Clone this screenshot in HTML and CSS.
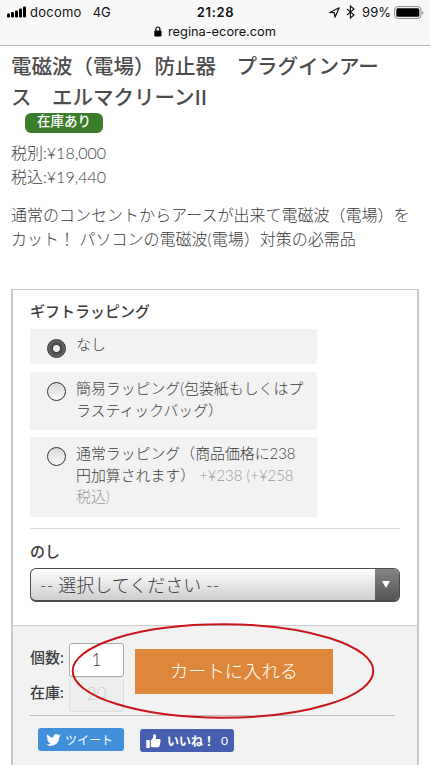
FILE: index.html
```html
<!DOCTYPE html>
<html lang="ja">
<head>
  <meta charset="UTF-8" />
  <meta name="viewport" content="width=device-width, initial-scale=1.0" />
  <title>電磁波（電場）防止器 プラグインアース エルマクリーンII</title>
  <link rel="stylesheet" href="styles.css">
</head>
<body>
  <header class="browser-bar">
    <div class="status">
      <div class="status-left">
        <svg class="signal" width="19" height="12" viewBox="0 0 19 12"><rect x="0" y="7.5" width="3" height="4" rx="1"/><rect x="4" y="6" width="3" height="5.5" rx="1"/><rect x="8" y="4.5" width="3" height="7" rx="1"/><rect x="12" y="2.5" width="3" height="9" rx="1"/><rect x="16" y="0.5" width="3" height="11" rx="1"/></svg>
        <span class="carrier">docomo</span>
        <span class="network">4G</span>
      </div>
      <div class="clock">21:28</div>
      <div class="status-right">
        <svg width="11" height="11" viewBox="0 0 11 11"><path d="M.8 5.500 10.200.8 6 10.200 5.300 5.700Z" fill="none" stroke="#111" stroke-width="1.200" stroke-linejoin="round"/></svg>
        <svg class="bluetooth" width="9" height="14" viewBox="0 0 9 14"><path d="M1 4l7 6-3.600 3V1L8 4l-7 6" fill="none" stroke="#111" stroke-width="1.100"/></svg>
        <span class="percent">99%</span>
        <svg class="battery" width="31" height="13" viewBox="0 0 31 13"><rect x=".6" y=".6" width="26.4" height="11.8" rx="3" fill="none" stroke="#888" stroke-width="1"/><rect x="2.3" y="2.2" width="23" height="8.6" rx="1.5"/><path d="M28.5 4.5q1.8 2 0 4z" fill="#777"/></svg>
      </div>
    </div>
    <div class="address">
      <svg width="8" height="11" viewBox="0 0 8 11"><rect x=".3" y="4.6" width="7.2" height="5.8" rx="1"/><path d="M1.9 5V3a2 2 0 0 1 4 0v2" fill="none" stroke="#000" stroke-width="1.2"/></svg>
      <span>regina-ecore.com</span>
    </div>
  </header>

  <main>
    <h1>電磁波（電場）防止器　プラグインアー<br>ス　エルマクリーンII</h1>
    <div class="stock-badge">在庫あり</div>
    <div class="price">税別:<span>¥18,000</span><br>税込:<span>¥19,440</span></div>
    <p class="description">通常のコンセントからアースが出来て電磁波（電場）を<br>カット！ パソコンの電磁波(電場）対策の必需品</p>

    <form class="order">
      <section class="options">
        <h2>ギフトラッピング</h2>
        <label class="option">
          <input type="radio" name="wrap" checked>
          <span>なし</span>
        </label>
        <label class="option two-line">
          <input type="radio" name="wrap">
          <span>簡易ラッピング(包装紙もしくはプ<br>ラスティックバッグ）</span>
        </label>
        <label class="option three-line">
          <input type="radio" name="wrap">
          <span>通常ラッピング（商品価格に238<br>円加算されます） <em>+¥238 (+¥258<br>税込)</em></span>
        </label>
        <hr>
        <h2 class="noshi">のし</h2>
        <div class="select">
          <span class="select-text">-- 選択してください --</span>
          <span class="select-arrow"><svg width="8" height="7" viewBox="0 0 8 7"><path d="M0 0h8L4 7z" fill="#fff"/></svg></span>
        </div>
      </section>

      <section class="cart">
        <div class="cart-row">
          <div class="labels">
            <span>個数:</span>
            <span>在庫:</span>
          </div>
          <div class="numbers">
            <div class="number">1</div>
            <div class="number disabled">20</div>
          </div>
          <button type="button" class="cart-btn">カートに入れる</button>
          <svg class="marker" width="304" height="98" viewBox="0 0 304 98"><ellipse cx="152" cy="49" rx="150.3" ry="46.7" fill="none" stroke="#c9151b" stroke-width="2"/></svg>
        </div>
        <div class="social">
          <a class="tweet">
            <svg width="15" height="12" viewBox="0 0 24 20"><path d="M24 2.4a10 10 0 0 1-2.8.8A5 5 0 0 0 23.3.5a10 10 0 0 1-3.1 1.2 4.9 4.9 0 0 0-8.4 4.5A14 14 0 0 1 1.7 1a4.9 4.9 0 0 0 1.5 6.6A5 5 0 0 1 1 7v.1a4.9 4.9 0 0 0 3.9 4.8 5 5 0 0 1-2.2.1 4.9 4.9 0 0 0 4.6 3.4A9.900 9.900 0 0 1 0 17.500 14 14 0 0 0 21.500 5.700v-.7A10 10 0 0 0 24 2.400z" fill="#fff"/></svg>
            <span>ツイート</span>
          </a>
          <a class="like">
            <svg width="15" height="14" viewBox="0 0 15 14"><rect x=".3" y="6" width="3.5" height="8" rx=".6" fill="#fff"/><path d="M4.800 12.700V6.500L7.200 3.600V1.300Q7.300.1 8.500.3c1.800.3 2 2.300 1.100 4.600h3.700c1.500 0 1.700 1.500.8 2.200.9.700.6 1.900-.2 2.200.6.800.3 1.700-.5 2 .4 1.100-.2 2-1.400 2H7.500c-1.200 0-1.700-.6-2.700-.6z" fill="#fff"/></svg>
            <b>いいね！</b>
            <span>0</span>
          </a>
        </div>
      </section>
    </form>
  </main>
</body>
</html>
```
FILE: styles.css
```css
* {
  box-sizing: border-box;
}
body {
  font-family: Lato, 'Noto Sans CJK JP', sans-serif;
  font-weight: 300;
  background: #fff;
  margin: 0;
  height: 765px;
  overflow: hidden;
  color: #3c3c3c;
}
svg {
  display: block;
  flex: none;
}
.browser-bar {
  height: 46px;
  background: #f8f8f8;
  border-bottom: 1px solid #b4b4b4;
  font-family: Inter, sans-serif;
  font-weight: 400;
  color: #111;
}
.status {
  display: grid;
  grid-template-columns: 1fr auto 1fr;
  align-items: center;
  height: 24px;
  padding: 0 6px 0 7px;
  font-size: 13px;
}
.status-left, .status-right {
  display: flex;
  align-items: center;
}
.status-right {
  justify-content: flex-end;
}
.carrier {
  margin-left: 4px;
  letter-spacing: 0.25px;
}
.network {
  margin-left: 11px;
}
.clock {
  font-weight: 600;
  letter-spacing: 0.7px;
}
.bluetooth {
  margin: 0 7px 0 6px;
}
.battery {
  margin-left: 3px;
  margin-right: -1px;
}
.address {
  display: flex;
  justify-content: center;
  align-items: center;
  gap: 6px;
  height: 14px;
  font-size: 12.8px;
}
main {
  padding: 4px 11px 0;
}
h1 {
  font-family: 'Noto Sans CJK JP', sans-serif;
  font-size: 20.5px;
  font-weight: 500;
  line-height: 31px;
  margin: 0 0 1px;
  color: #4c4c4c;
  white-space: nowrap;
}
.stock-badge {
  width: 78px;
  height: 20px;
  margin-left: 14px;
  border-radius: 6px;
  background: #3c7d2b;
  color: #fff;
  font-size: 13.5px;
  font-weight: 500;
  line-height: 17px;
  text-align: center;
}
.price {
  margin-top: 8px;
  font-size: 16px;
  line-height: 24px;
}
.description {
  margin: 14px 0 0;
  font-size: 16.03px;
  line-height: 24px;
  white-space: nowrap;
}
.order {
  margin-top: 38px;
  width: 408px;
  height: 500px;
  border: 1px solid #c8c8c8;
  border-width: 1px 2px;
}
.options {
  height: 335px;
  padding: 10px 17px 0;
}
h2 {
  font-size: 15px;
  font-weight: 500;
  line-height: 22px;
  margin: 0 0 7px;
}
.option {
  display: flex;
  width: 287px;
  height: 35px;
  margin-bottom: 8px;
  padding: 5px 0 0 17px;
  background: #f2f2f2;
  font-size: 14.9px;
  line-height: 21.6px;
  white-space: nowrap;
}
.option.two-line {
  height: 58px;
  margin-bottom: 7px;
}
.option.three-line {
  height: 80px;
  margin-bottom: 11px;
}
.two-line span, .three-line span {
  padding-top: 1px;
}
.option em {
  font-style: normal;
  color: #999;
}
.option input {
  appearance: none;
  flex: none;
  width: 19px;
  height: 19px;
  margin: 5px 10px 0 0;
  border: 1.5px solid #333;
  border-radius: 50%;
  background: linear-gradient(#d8d8d8, #fafafa);
}
.option input:checked {
  background: radial-gradient(circle, #eee 0 3px, #444 4px, #666 8px);
}
hr {
  height: 1px;
  margin: 0 0 11px;
  border: 0;
  background: #ddd;
}
.noshi {
  margin-bottom: 6px;
}
.select {
  display: flex;
  height: 34px;
  width: 370px;
  border: 1px solid #4c4c4c;
  border-bottom-width: 2px;
  border-radius: 6px;
  background: linear-gradient(#fff, #cecece);
  overflow: hidden;
}
.select-text {
  flex: 1;
  padding-left: 9px;
  font-size: 18px;
  line-height: 33px;
  white-space: nowrap;
}
.select-arrow {
  display: flex;
  justify-content: center;
  width: 24px;
  padding: 12px 3px 0 0;
  background: linear-gradient(#858585, #555);
}
.cart {
  height: 163px;
  padding: 17px 17px 0;
  border-top: 1px solid #ccc;
  background: #f2f2f2;
}
.cart-row {
  position: relative;
  display: flex;
  width: 365px;
  height: 73px;
  border-bottom: 1px solid #bbb;
}
.labels {
  display: flex;
  flex-direction: column;
  width: 39px;
  font-size: 15px;
  font-weight: 500;
  line-height: 34.5px;
  margin-top: -3px;
  white-space: nowrap;
}
.number {
  width: 55px;
  height: 34px;
  border: 1px solid #aaa;
  border-radius: 3px;
  background: #fff;
  font-size: 17px;
  line-height: 32px;
  text-align: center;
}
.number.disabled {
  height: 35px;
  border-color: #ddd;
  background: #efeeee;
  color: #ccc;
}
.cart-btn {
  width: 198px;
  height: 45px;
  margin: 6px 0 0 11px;
  padding: 0 0 4px;
  border: 0;
  background: #de873a;
  color: #fff;
  font-family: inherit;
  font-size: 18.3px;
  font-weight: 300;
}
/* red ring drawn over the cart button */
.marker {
  position: absolute;
  left: 41px;
  top: -21px;
  pointer-events: none;
}
.social {
  display: flex;
  gap: 16px;
  padding: 12px 0 0 8px;
  color: #fff;
}
.tweet, .like {
  display: flex;
  align-items: center;
  height: 23px;
  border-radius: 3px;
  white-space: nowrap;
}
.tweet {
  width: 86px;
  padding-left: 8px;
  gap: 4px;
  background: #428fda;
  font-size: 12px;
  font-weight: 400;
}
.like {
  width: 94px;
  margin-top: 1px;
  padding-left: 6px;
  background: #465fae;
  font-size: 12px;
  font-weight: 400;
}
.like b {
  margin-left: 6px;
}
.like span {
  margin-left: 6px;
}
```
